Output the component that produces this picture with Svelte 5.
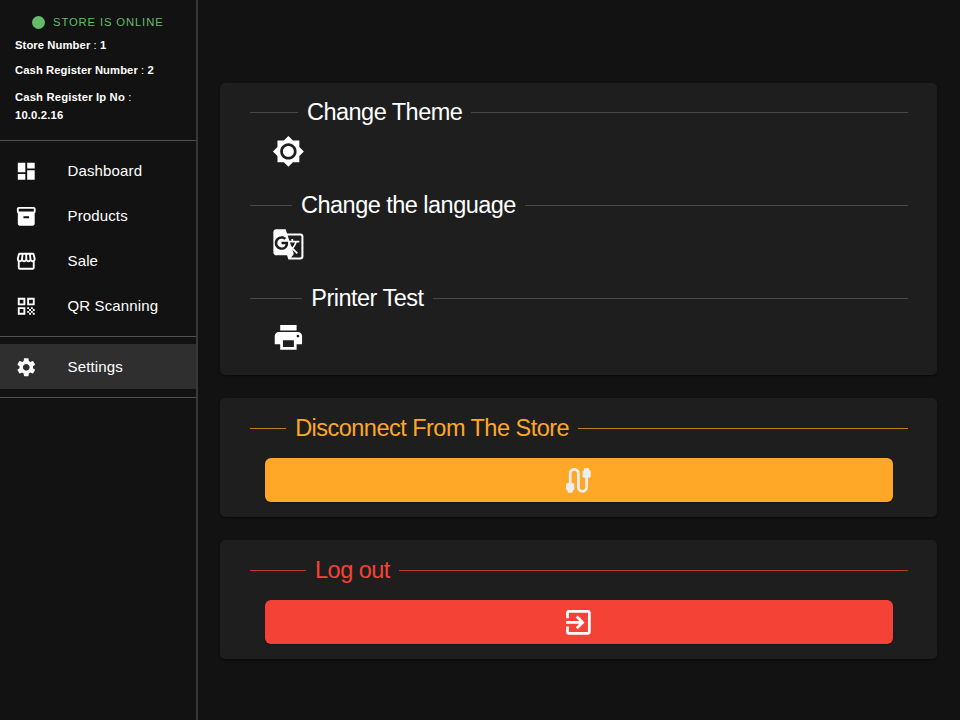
<script>
  const navItems = [
    { label: 'Dashboard', path: 'M3 13h8V3H3v10zm0 8h8v-6H3v6zm10 0h8V11h-8v10zm0-18v6h8V3h-8z' },
    { label: 'Products', path: 'M20 2H4c-1 0-2 .9-2 2v3.01c0 .72.43 1.34 1 1.69V20c0 1.1 1.1 2 2 2h14c.9 0 2-.9 2-2V8.7c.57-.35 1-.97 1-1.69V4c0-1.1-1-2-2-2zm-5 12H9v-2h6v2zm5-7H4V4h16v3z' },
    { label: 'Sale', path: 'M21.9 8.89l-1.05-4.37c-.22-.9-1-1.52-1.91-1.52H5.05c-.9 0-1.69.63-1.9 1.52L2.1 8.89c-.24 1.02-.02 2.06.62 2.88.08.11.19.19.28.29V19c0 1.1.9 2 2 2h14c1.1 0 2-.9 2-2v-6.94c.09-.09.2-.18.28-.28.64-.82.87-1.87.62-2.89zm-2.99-3.9l1.05 4.37c.1.42.01.84-.25 1.17-.14.18-.44.47-.94.47-.61 0-1.14-.49-1.21-1.14L16.98 5l1.93-.01zM13 5h1.96l.54 4.52c.05.39-.07.78-.33 1.07-.22.26-.54.41-.95.41-.67 0-1.22-.59-1.22-1.31V5zM8.49 9.52L9.04 5H11v4.69c0 .72-.55 1.31-1.29 1.31-.34 0-.65-.15-.89-.41-.25-.29-.37-.68-.33-1.07zm-4.45-.16L5.05 5h1.97l-.58 4.86c-.08.65-.6 1.14-1.21 1.14-.49 0-.8-.29-.93-.47-.27-.32-.36-.75-.26-1.17zM5 19v-6.03c.08.01.15.03.23.03.87 0 1.66-.36 2.24-.95.6.6 1.4.95 2.31.95.87 0 1.65-.36 2.23-.93.59.57 1.39.93 2.29.93.84 0 1.64-.35 2.24-.95.58.59 1.37.95 2.24.95.08 0 .15-.02.23-.03V19H5z' },
    { label: 'QR Scanning', path: 'M3 11h8V3H3v8zm2-6h4v4H5V5zM3 21h8v-8H3v8zm2-6h4v4H5v-4zM13 3v8h8V3h-8zm6 6h-4V5h4v4zM19 19h2v2h-2zM13 13h2v2h-2zM15 15h2v2h-2zM13 17h2v2h-2zM15 19h2v2h-2zM17 17h2v2h-2zM17 13h2v2h-2zM19 15h2v2h-2z' }
  ];
  const settingsItem = { label: 'Settings', path: 'M19.14 12.94c.04-.3.06-.61.06-.94 0-.32-.02-.64-.07-.94l2.03-1.58c.18-.14.23-.41.12-.61l-1.92-3.32c-.12-.22-.37-.29-.59-.22l-2.39.96c-.5-.38-1.03-.7-1.62-.94l-.36-2.54c-.04-.24-.24-.41-.48-.41h-3.84c-.24 0-.43.17-.47.41l-.36 2.54c-.59.24-1.13.57-1.62.94l-2.39-.96c-.22-.08-.47 0-.59.22L2.74 8.87c-.12.21-.08.47.12.61l2.03 1.58c-.05.3-.09.63-.09.94s.02.64.07.94l-2.03 1.58c-.18.14-.23.41-.12.61l1.92 3.32c.12.22.37.29.59.22l2.39-.96c.5.38 1.03.7 1.62.94l.36 2.54c.05.24.24.41.48.41h3.84c.24 0 .44-.17.47-.41l.36-2.54c.59-.24 1.13-.56 1.62-.94l2.39.96c.22.08.47 0 .59-.22l1.92-3.32c.12-.22.07-.47-.12-.61l-2.01-1.58zM12 15.6c-1.98 0-3.6-1.62-3.6-3.6s1.62-3.6 3.6-3.6 3.6 1.62 3.6 3.6-1.62 3.6-3.6 3.6z' };

  const preferences = [
    { title: 'Change Theme', path: 'M20 8.69V4h-4.69L12 .69 8.69 4H4v4.69L.69 12 4 15.31V20h4.69L12 23.31 15.31 20H20v-4.69L23.31 12 20 8.69zM12 18c-3.31 0-6-2.69-6-6s2.69-6 6-6 6 2.69 6 6-2.69 6-6 6zm0-10c-2.21 0-4 1.79-4 4s1.79 4 4 4 4-1.79 4-4-1.79-4-4-4z' },
    { title: 'Change the language', path: 'M21 4H11l-1-3H3c-1.1 0-2 .9-2 2v15c0 1.1.9 2 2 2h8l1 3h9c1.1 0 2-.9 2-2V6c0-1.1-.9-2-2-2zM7 16c-2.76 0-5-2.24-5-5s2.24-5 5-5c1.35 0 2.48.5 3.35 1.3L9.03 8.57c-.38-.36-1.04-.78-2.03-.78-1.74 0-3.15 1.44-3.15 3.21S5.26 14.21 7 14.21c2.01 0 2.84-1.44 2.92-2.41H7v-1.71h4.68c.07.31.12.61.12 1.02C11.8 13.97 9.89 16 7 16zm6.17-5.42h3.7c-.43 1.25-1.11 2.43-2.05 3.47-.31-.35-.6-.72-.86-1.1l-.79-2.37zm8.33 9.92c0 .55-.45 1-1 1H14l2-2.5-1.04-3.1 3.1 3.1.92-.92-3.3-3.25.02-.02c1.13-1.25 1.93-2.69 2.4-4.22H20v-1.3h-4.53V8h-1.29v1.29h-1.44L11.46 5.5h9.04c.55 0 1 .45 1 1v14z' },
    { title: 'Printer Test', path: 'M19 8H5c-1.66 0-3 1.34-3 3v6h4v4h12v-4h4v-6c0-1.66-1.34-3-3-3zm-3 11H8v-5h8v5zm3-7c-.55 0-1-.45-1-1s.45-1 1-1 1 .45 1 1-.45 1-1 1zm-1-9H6v4h12V3z' }
  ];

  const actions = [
    { title: 'Disconnect From The Store', tone: 'warning', path: 'M20 5V4c0-.55-.45-1-1-1h-2c-.55 0-1 .45-1 1v1h-1v4c0 .55.45 1 1 1h1v7c0 1.1-.9 2-2 2s-2-.9-2-2V7c0-2.21-1.79-4-4-4S5 4.79 5 7v7H4c-.55 0-1 .45-1 1v4h1v1c0 .55.45 1 1 1h2c.55 0 1-.45 1-1v-1h1v-4c0-.55-.45-1-1-1H7V7c0-1.1.9-2 2-2s2 .9 2 2v10c0 2.21 1.79 4 4 4s4-1.79 4-4v-7h1c.55 0 1-.45 1-1V5h-1z' },
    { title: 'Log out', tone: 'error', path: 'M10.09 15.59 11.5 17l5-5-5-5-1.41 1.41L12.67 11H3v2h9.67l-2.58 2.59zM19 3H5c-1.11 0-2 .9-2 2v4h2V5h14v14H5v-4H3v4c0 1.1.89 2 2 2h14c1.1 0 2-.9 2-2V5c0-1.1-.9-2-2-2z' }
  ];
</script>

{#snippet icon(path)}
  <svg viewBox="0 0 24 24" aria-hidden="true"><path d={path} /></svg>
{/snippet}

{#snippet navRow(item, selected)}
  <a class="nav-row" class:selected href="#{item.label}">
    {@render icon(item.path)}
    <span>{item.label}</span>
  </a>
{/snippet}

<div class="app">
  <aside>
    <header>
      <div class="status"><i class="dot"></i><span>STORE IS ONLINE</span></div>
      <p class="store">Store Number <span>:</span> 1</p>
      <p class="register">Cash Register Number <span>:</span> 2</p>
      <p class="ip">Cash Register Ip No <span>:</span><br />10.0.2.16</p>
    </header>
    <nav>
      {#each navItems as item}
        {@render navRow(item, false)}
      {/each}
    </nav>
    <nav>
      {@render navRow(settingsItem, true)}
    </nav>
  </aside>

  <main>
    <section class="card preferences">
      {#each preferences as item}
        <div class="preference">
          <h2><span>{item.title}</span></h2>
          <button class="icon-button" aria-label={item.title}>{@render icon(item.path)}</button>
        </div>
      {/each}
    </section>
    {#each actions as item}
      <section class="card action {item.tone}">
        <h2><span>{item.title}</span></h2>
        <button class="wide-button" aria-label={item.title}>{@render icon(item.path)}</button>
      </section>
    {/each}
  </main>
</div>

<style>
  :global(body) {
    margin: 0;
    background: #121212;
  }
  .app {
    box-sizing: border-box;
    display: flex;
    width: 960px;
    height: 720px;
    overflow: hidden;
    background: #121212;
    color: #fff;
    font-family: 'Liberation Sans', Arial, sans-serif;
  }
  aside {
    box-sizing: border-box;
    flex: none;
    width: 198px;
    border-right: 2px solid #383838;
  }
  header {
    box-sizing: border-box;
    height: 141px;
    padding: 12px 15px 0;
    border-bottom: 1px solid #505050;
  }
  .status {
    display: flex;
    align-items: center;
    height: 20px;
    padding-left: 17px;
    gap: 8px;
    color: #66bb6a;
    font-size: 11.25px;
    letter-spacing: 0.88px;
    white-space: nowrap;
  }
  .dot {
    width: 13px;
    height: 13px;
    border-radius: 50%;
    background: #66bb6a;
  }
  p {
    margin: 0;
    font-size: 11.25px;
    font-weight: 700;
    line-height: 18px;
    letter-spacing: 0.08px;
    white-space: nowrap;
  }
  p span {
    font-weight: 400;
  }
  .store {
    padding-top: 4px;
  }
  .register {
    padding-top: 7px;
  }
  .ip {
    padding-top: 9px;
    letter-spacing: 0.16px;
  }
  svg {
    display: block;
    fill: currentColor;
  }
  nav {
    padding: 7px 0 8px;
    border-bottom: 1px solid #505050;
  }
  .nav-row {
    display: flex;
    align-items: center;
    height: 45px;
    padding-left: 15px;
    gap: 30px;
    color: #fff;
    font-size: 15px;
    letter-spacing: 0.14px;
    text-decoration: none;
  }
  .nav-row.selected {
    background: #2f2f2f;
  }
  .nav-row svg {
    width: 22.5px;
    height: 22.5px;
    margin-top: 1px;
  }
  main {
    display: flex;
    flex: 1;
    flex-direction: column;
    gap: 23.1px;
    padding: 82.7px 22.7px 0 22px;
  }
  .card {
    --line: #484848;
    box-sizing: border-box;
    border-radius: 5px;
    background: #1e1e1e;
    box-shadow: 0 2px 1px -1px rgba(0, 0, 0, 0.2), 0 1px 1px rgba(0, 0, 0, 0.14), 0 1px 3px rgba(0, 0, 0, 0.12);
  }
  .preferences {
    height: 292.5px;
    padding: 14.5px 29.5px 0;
  }
  .preference {
    height: 93px;
  }
  h2 {
    display: flex;
    align-items: center;
    height: 30px;
    margin: 0;
    font-size: 23.5px;
    font-weight: 400;
    line-height: 30px;
    letter-spacing: -0.52px;
    white-space: nowrap;
  }
  h2::before,
  h2::after {
    content: '';
    width: 10%;
    height: 1px;
    background: var(--line);
  }
  h2::after {
    width: 90%;
  }
  h2 span {
    padding: 0 9px;
  }
  button {
    display: flex;
    align-items: center;
    justify-content: center;
    border: 0;
    color: #fff;
  }
  button svg {
    width: 32.8px;
    height: 32.8px;
  }
  .icon-button {
    width: 48px;
    height: 48px;
    margin-left: 15px;
    padding: 0;
    background: transparent;
  }
  .action {
    height: 118.7px;
    padding: 15px 29.5px 0;
  }
  .wide-button {
    width: calc(100% - 30px);
    height: 44.2px;
    margin: 14.8px 15px 0;
    padding: 0;
    border-radius: 6px;
    box-shadow: 0 1px 2px rgba(0, 0, 0, 0.35);
  }
  .warning {
    --line: #bf7e20;
    color: #ffa726;
  }
  .warning .wide-button {
    background: #ffa726;
    color: #eee;
  }
  .error {
    --line: #b8362c;
    color: #f44336;
  }
  .error .wide-button {
    background: #f44336;
  }
</style>
